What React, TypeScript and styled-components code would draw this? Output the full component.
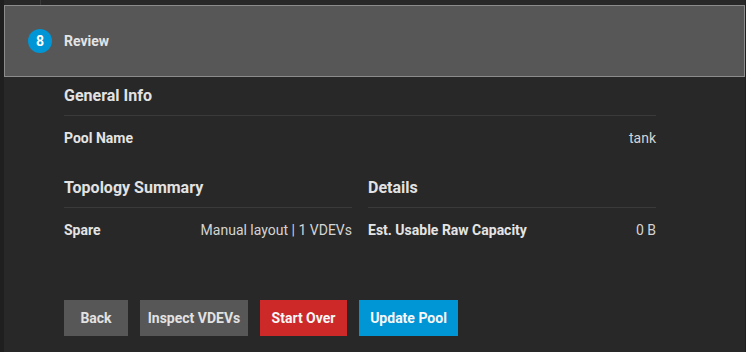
import React from 'react';
import styled, { createGlobalStyle } from 'styled-components';

const GlobalStyle = createGlobalStyle`
  html, body {
    margin: 0;
    padding: 0;
    background: #1f1f1f;
    font-family: Roboto, "Liberation Sans", sans-serif;
  }
`;

const Page = styled.div`
  width: 746px;
  height: 352px;
  padding: 0 1px 0 4px;
  box-sizing: border-box;
  background: #1f1f1f;
  overflow: hidden;
`;

const Card = styled.div`
  height: 100%;
  background: #282828;
  display: flex;
  flex-direction: column;
`;

const Connector = styled.div`
  height: 5px;
  padding-left: 36px;
  &::before {
    content: '';
    display: block;
    width: 1px;
    height: 100%;
    background: #3a3a3a;
  }
`;

const StepHeader = styled.div`
  height: 70px;
  background: #575757;
  border: 1px solid #8c8c8c;
  display: flex;
  align-items: center;
  gap: 12px;
  padding-left: 23px;
`;

const StepNumber = styled.div`
  width: 24px;
  height: 24px;
  border-radius: 50%;
  background: #0095d5;
  color: #ffffff;
  font-size: 14px;
  font-weight: 700;
  display: flex;
  align-items: center;
  justify-content: center;
`;

const StepTitle = styled.div`
  color: #e4e4e4;
  font-size: 14px;
  font-weight: 700;
`;

const Content = styled.div`
  padding: 9px 0 0 60px;
  width: 592px;
`;

const Columns = styled.div`
  display: grid;
  grid-template-columns: 288px 288px;
  column-gap: 16px;
  margin-top: 30px;
`;

const SectionTitle = styled.div`
  color: #e2e2e2;
  font-size: 16px;
  font-weight: 700;
  line-height: 20px;
  padding-bottom: 9px;
  border-bottom: 1px solid #3a3a3a;
`;

const Row = styled.div`
  display: flex;
  justify-content: space-between;
  align-items: center;
  margin-top: 12px;
  line-height: 20px;
  font-size: 14px;
`;

const Label = styled.span`
  color: #e4e4e4;
  font-weight: 700;
`;

const Value = styled.span`
  color: #d4d4d4;
`;

const Actions = styled.div`
  display: flex;
  gap: 12px;
  margin-top: 60px;
`;

const Button = styled.button<{ $kind?: 'default' | 'warn' | 'primary'; $width: number }>`
  width: ${({ $width }) => $width}px;
  height: 36px;
  padding: 0;
  border: none;
  border-radius: 0;
  font-family: Roboto, "Liberation Sans", sans-serif;
  font-size: 14px;
  font-weight: 700;
  cursor: pointer;
  background: ${({ $kind }) =>
    $kind === 'warn' ? '#ce2929' : $kind === 'primary' ? '#0095d5' : '#575757'};
  color: ${({ $kind }) => ($kind === 'default' || !$kind ? '#e2e2e2' : '#f8f8f8')};
`;

const App = () => {
  return (
    <Page>
      <GlobalStyle />
      <Card>
        <Connector />
        <StepHeader>
          <StepNumber>8</StepNumber>
          <StepTitle>Review</StepTitle>
        </StepHeader>
        <Content>
          <SectionTitle>General Info</SectionTitle>
          <Row>
            <Label>Pool Name</Label>
            <Value>tank</Value>
          </Row>
          <Columns>
            <div>
              <SectionTitle>Topology Summary</SectionTitle>
              <Row>
                <Label>Spare</Label>
                <Value>Manual layout | 1 VDEVs</Value>
              </Row>
            </div>
            <div>
              <SectionTitle>Details</SectionTitle>
              <Row>
                <Label>Est. Usable Raw Capacity</Label>
                <Value>0 B</Value>
              </Row>
            </div>
          </Columns>
          <Actions>
            <Button $width={64}>Back</Button>
            <Button $width={108}>Inspect VDEVs</Button>
            <Button $kind="warn" $width={87}>Start Over</Button>
            <Button $kind="primary" $width={99}>Update Pool</Button>
          </Actions>
        </Content>
      </Card>
    </Page>
  );
};

export default App;
